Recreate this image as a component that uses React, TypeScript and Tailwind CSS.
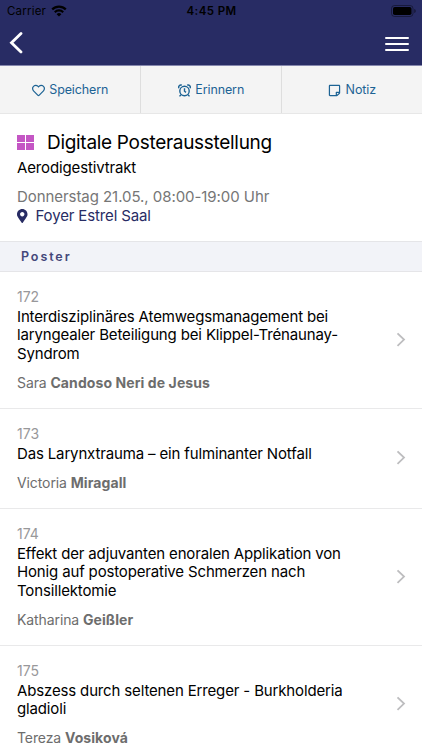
import type { ReactNode } from 'react';
import { FaMapMarkerAlt, FaRegHeart, FaRegStickyNote } from 'react-icons/fa';

interface Poster {
  id: number;
  lines: string[];
  firstName: string;
  lastName: string;
}

const posters: Poster[] = [
  {
    id: 172,
    lines: [
      'Interdisziplinäres Atemwegsmanagement bei',
      'laryngealer Beteiligung bei Klippel-Trénaunay-',
      'Syndrom',
    ],
    firstName: 'Sara',
    lastName: 'Candoso Neri de Jesus',
  },
  {
    id: 173,
    lines: ['Das Larynxtrauma – ein fulminanter Notfall'],
    firstName: 'Victoria',
    lastName: 'Miragall',
  },
  {
    id: 174,
    lines: [
      'Effekt der adjuvanten enoralen Applikation von',
      'Honig auf postoperative Schmerzen nach',
      'Tonsillektomie',
    ],
    firstName: 'Katharina',
    lastName: 'Geißler',
  },
  {
    id: 175,
    lines: ['Abszess durch seltenen Erreger - Burkholderia', 'gladioli'],
    firstName: 'Tereza',
    lastName: 'Vosiková',
  },
];

function StatusBar() {
  return (
    <div className="grid h-[22px] grid-cols-3 items-center pl-[7px] pr-[6px] text-[11.5px] text-black">
      <div className="flex items-center gap-[5px]">
        <span className="pt-[2px] tracking-[0.2px]">Carrier</span>
        <svg width="16" height="12" viewBox="0 0 16 12" fill="none" stroke="currentColor" strokeWidth="2.2">
          <path d="M1.2 4.4a9.6 9.6 0 0 1 13.6 0" />
          <path d="M3.8 7.2a5.9 5.9 0 0 1 8.4 0" />
          <path d="M8 11.6 5.6 9.2a3.4 3.4 0 0 1 4.8 0z" fill="currentColor" stroke="none" />
        </svg>
      </div>
      <span className="pt-[2px] text-center font-semibold tracking-[0.4px]">4:45 PM</span>
      <svg className="justify-self-end" width="25" height="12" viewBox="0 0 25 12">
        <rect x="0.5" y="0.5" width="21.5" height="11" rx="3" fill="none" stroke="#000" strokeOpacity="0.4" />
        <rect x="2" y="2" width="18.5" height="8" rx="1.8" />
        <path d="M23.3 4v4c1-.4 1.4-1.2 1.4-2s-.4-1.6-1.4-2z" fillOpacity="0.5" />
      </svg>
    </div>
  );
}

function AlarmIcon() {
  return (
    <svg width="13" height="13" viewBox="0 0 13 13" fill="none" stroke="currentColor" strokeWidth="1.4">
      <circle cx="6.5" cy="7" r="4.7" />
      <path d="M6.5 4.2v3l1.5 1.2M3 10.7l-1.5 1.7M10 10.7l1.5 1.7" />
      <path d="M.9 4.2C.1 2.2 1.6.4 3.9 1.2M12.1 4.2c.8-2-.7-3.8-3-3" />
    </svg>
  );
}

function ActionButton({ icon, label }: { icon: ReactNode; label: string }) {
  return (
    <button className="flex flex-1 items-center justify-center gap-[4.5px] border-r border-[#dedede] pt-[2px] text-[12.5px] tracking-[-0.12px] text-[#1d6394] last:border-r-0">
      {icon}
      <span>{label}</span>
    </button>
  );
}

function PosterRow({ poster }: { poster: Poster }) {
  return (
    <li className="flex items-center justify-between border-b border-[#e9e9ea] pb-[15px] pl-[17px] pr-4 pt-[15px]">
      <div>
        <p className="text-[14px] leading-[20px] text-[#98989a]">{poster.id}</p>
        <h2 className="mt-px text-[15px] leading-[18.4px] tracking-[-0.15px] text-black">
          {poster.lines.map((line) => (
            <span key={line} className="block whitespace-nowrap">
              {line}
            </span>
          ))}
        </h2>
        <p className="mt-[9.6px] text-[14px] leading-5 tracking-[-0.1px] text-[#6d6d6d]">
          {poster.firstName} <b className="font-bold tracking-[0.09px]">{poster.lastName}</b>
        </p>
      </div>
      <svg width="10" height="16" viewBox="0 0 10 16" fill="none" stroke="#bdbdbf" strokeWidth="1.8">
        <path d="M1.5 1.4 8 7.600l-6.500 6.200" />
      </svg>
    </li>
  );
}

export default function App() {
  return (
    <div className="h-[750px] w-[422px] overflow-hidden bg-white font-[Inter,sans-serif]">
      <header className="h-[66px] border-b border-[#8587ad] bg-[#282c64]">
        <StatusBar />
        <div className="flex h-[43px] items-center justify-between pl-[9px] pr-[13px]">
          <svg className="-mt-px" width="14" height="22" viewBox="0 0 14 22" fill="none" stroke="#fff" strokeWidth="2.8" strokeLinecap="round">
            <path d="M12 1.5 2.5 10.700l9.500 9.200" />
          </svg>
          <svg width="24" height="16" viewBox="0 0 24 16" stroke="#fff" strokeWidth="2" strokeLinecap="round">
            <path d="M1 2h22M1 8h22M1 14h22" />
          </svg>
        </div>
      </header>

      <nav className="flex h-12 border-b border-[#e7e7e7] bg-[#f4f4f4]">
        <ActionButton icon={<FaRegHeart size={13} />} label="Speichern" />
        <ActionButton icon={<AlarmIcon />} label="Erinnern" />
        <ActionButton icon={<FaRegStickyNote size={13} />} label="Notiz" />
      </nav>

      <section className="h-[127px] px-[17px] pt-[15px]">
        <div className="flex items-center gap-[13px]">
          <div className="-mt-[2px] grid h-[15px] w-[17px] grid-cols-2 gap-px">
            <i className="bg-[#c456c4]" />
            <i className="bg-[#c456c4]" />
            <i className="bg-[#c456c4]" />
            <i className="bg-[#c456c4]" />
          </div>
          <h1 className="text-[19px] leading-[28px] tracking-[-0.3px] text-black">Digitale Posterausstellung</h1>
        </div>
        <p className="pt-px text-[15px] leading-5 tracking-[-0.14px] text-black">Aerodigestivtrakt</p>
        <p className="mt-[9px] text-[15px] leading-5 tracking-[-0.06px] text-[#767676]">
          Donnerstag 21.05., 08:00-19:00 Uhr
        </p>
        <div className="-mt-px flex items-center gap-[8px] text-[#282c64]">
          <FaMapMarkerAlt className="h-[14px] w-[10.5px]" />
          <span className="text-[15px] leading-[19px] tracking-[-0.14px]">Foyer Estrel Saal</span>
        </div>
      </section>

      <div className="flex h-[31px] items-center border-b border-t border-[#e5e5e8] bg-[#f2f3f8] pl-[21px] pt-px text-[12.5px] font-semibold tracking-[1.9px] text-[#44477a]">
        Poster
      </div>

      <ul>
        {posters.map((poster) => (
          <PosterRow key={poster.id} poster={poster} />
        ))}
      </ul>
    </div>
  );
}
